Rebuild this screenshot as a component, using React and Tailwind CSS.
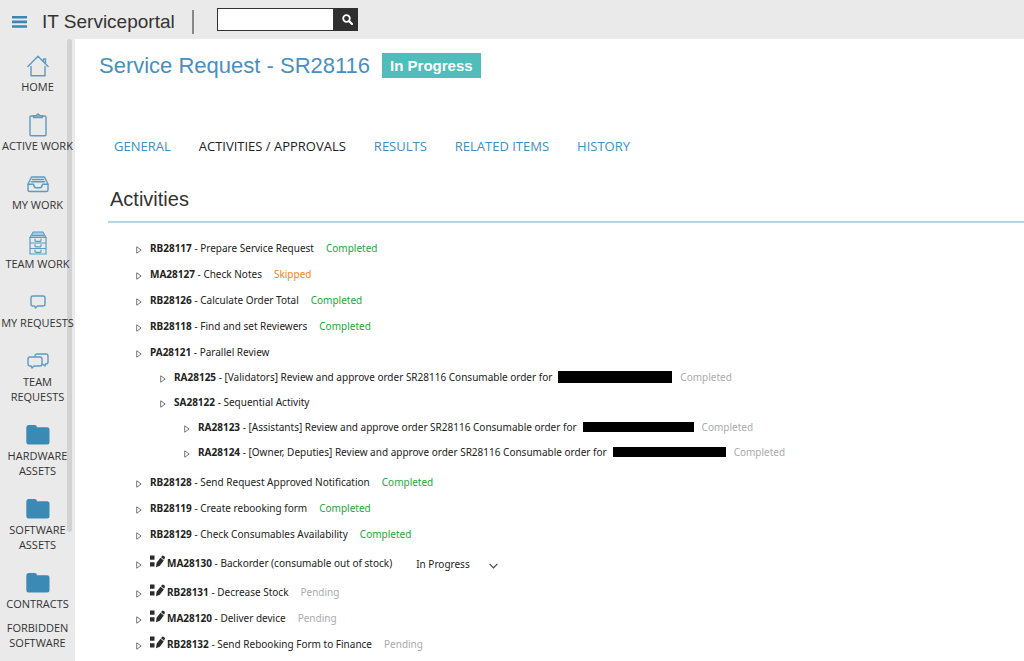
import { useState } from 'react';

const stroke = { fill: 'none', stroke: '#5b9cc4', strokeWidth: 1.4, strokeLinejoin: 'round', strokeLinecap: 'round' };

function HomeIcon() {
  return (
    <svg width="22" height="22" viewBox="0 0 22 22" {...stroke} aria-hidden="true">
      <path d="M.9 11.500 11 1.200 21.100 11.500M16.500 6.500V4H18.500V8.500M4 11.500V20.800H18V11.500" />
    </svg>
  );
}

function ClipboardIcon() {
  return (
    <svg width="18" height="24" viewBox="0 0 18 24" {...stroke} aria-hidden="true">
      <path d="M4.500 3H2.200Q1 3 1 4.200V21.500Q1 22.700 2.200 22.700H15.800Q17 22.700 17 21.500V4.200Q17 3 15.800 3H13.500" />
      <path d="M4.500 4.500V2.800L7.300 2.400 9 1l1.700 1.400 2.800.4v1.700Z" fill="#8dbad6" />
    </svg>
  );
}

function TrayIcon() {
  return (
    <svg width="22" height="18" viewBox="0 0 22 18" {...stroke} aria-hidden="true">
      <path d="M1 9.200 4.500 2H17.500L21 9.200V15Q21 16.500 19.500 16.500H2.500Q1 16.500 1 15Z" />
      <path d="M1 9.200H6.500Q7 12.800 9 12.800h4Q15 12.800 15.500 9.200H21M5.500 4.500h11M4.500 6.800h13" />
    </svg>
  );
}

function CabinetIcon() {
  return (
    <svg width="18" height="24" viewBox="0 0 18 24" {...stroke} strokeWidth="1.2" aria-hidden="true">
      <path d="M1 6.500 4.200 1h9.600L17 6.500Z" fill="#a9cbe0" />
      <path d="M1 6.500V23H17V6.500M1 12h16M1 17.500h16M3.500 4.500h11" />
      <path d="M6 8v1.500q0 .8.8.8h4.400q.8 0 .8-.8V8M6 13.500V15q0 .8.8.8h4.400q.8 0 .8-.8v-1.500M6 19v1.500q0 .8.8.8h4.400q.8 0 .8-.8V19" />
    </svg>
  );
}

function BubbleIcon() {
  return (
    <svg width="16" height="14" viewBox="0 0 16 14" {...stroke} aria-hidden="true">
      <path d="M3 1h10q2 0 2 2v6q0 2-2 2H7.500L5.500 13 4.500 11H3Q1 11 1 9V3Q1 1 3 1Z" />
    </svg>
  );
}

function BubblesIcon() {
  return (
    <svg width="22" height="16" viewBox="0 0 22 16" {...stroke} aria-hidden="true">
      <path d="M8 3.500V3Q8 1 10 1h9q2 0 2 2v6q0 2-2 2h-.5L18 13l-2.500-2" />
      <path d="M3 4h10q2 0 2 2v5q0 2-2 2H7L5 15 4.200 13H3q-2 0-2-2V6Q1 4 3 4Z" />
    </svg>
  );
}

function FolderIcon() {
  return (
    <svg width="24" height="20" viewBox="0 0 24 20" fill="#3a8ab5" aria-hidden="true">
      <path d="M2.500 0H8.500Q11 0 11 2.300H21Q23.500 2.300 23.500 4.800V17Q23.500 19.500 21 19.500H2.500Q.3 19.500 .3 17V2.500Q.3 0 2.500 0Z" />
    </svg>
  );
}

function TaskIcon() {
  return (
    <svg className="mb-1 mr-0.5 shrink-0" width="15" height="13" viewBox="0 0 15 13" fill="#2b2b2b" aria-hidden="true">
      <path d="M0 .5h4.500v4.300H0ZM0 7.200h4.500v4.300H0ZM6 12.300l.6-4.500L10.500 2.800 13.800 5.500 9.800 10.800ZM11 2.200 12 1Q12.800.2 13.800 1l.7.6q.8.7.1 1.600L14.200 4.800Z" />
    </svg>
  );
}

const nav = [
  { label: 'HOME', Icon: HomeIcon },
  { label: 'ACTIVE WORK', Icon: ClipboardIcon },
  { label: 'MY WORK', Icon: TrayIcon },
  { label: 'TEAM WORK', Icon: CabinetIcon },
  { label: 'MY REQUESTS', Icon: BubbleIcon },
  { label: 'TEAM REQUESTS', Icon: BubblesIcon },
  { label: 'HARDWARE ASSETS', Icon: FolderIcon },
  { label: 'SOFTWARE ASSETS', Icon: FolderIcon },
  { label: 'CONTRACTS', Icon: FolderIcon, tight: true },
  { label: 'FORBIDDEN SOFTWARE' },
];

const tabs = ['GENERAL', 'ACTIVITIES / APPROVALS', 'RESULTS', 'RELATED ITEMS', 'HISTORY'];

const activities = [
  { id: 'RB28117', title: 'Prepare Service Request', status: 'Completed', tone: 'text-[#22a83a]' },
  { id: 'MA28127', title: 'Check Notes', status: 'Skipped', tone: 'text-[#f5851a]' },
  { id: 'RB28126', title: 'Calculate Order Total', status: 'Completed', tone: 'text-[#22a83a]' },
  { id: 'RB28118', title: 'Find and set Reviewers', status: 'Completed', tone: 'text-[#22a83a]' },
  {
    id: 'PA28121',
    title: 'Parallel Review',
    children: [
      { id: 'RA28125', title: '[Validators] Review and approve order SR28116 Consumable order for', redacted: 'ml-1.5 h-3 w-[114px]', status: 'Completed', tone: 'text-[#a9abae]' },
      {
        id: 'SA28122',
        title: 'Sequential Activity',
        children: [
          { id: 'RA28123', title: '[Assistants] Review and approve order SR28116 Consumable order for', redacted: 'ml-1.5 h-2.5 w-[111px]', status: 'Completed', tone: 'text-[#a9abae]' },
          { id: 'RA28124', title: '[Owner, Deputies] Review and approve order SR28116 Consumable order for', redacted: 'ml-1.5 h-2.5 w-[113px]', status: 'Completed', tone: 'text-[#a9abae]' },
        ],
      },
    ],
  },
  { id: 'RB28128', title: 'Send Request Approved Notification', status: 'Completed', tone: 'text-[#22a83a]' },
  { id: 'RB28119', title: 'Create rebooking form', status: 'Completed', tone: 'text-[#22a83a]' },
  { id: 'RB28129', title: 'Check Consumables Availability', status: 'Completed', tone: 'text-[#22a83a]' },
  { id: 'MA28130', title: 'Backorder (consumable out of stock)', task: true, editable: true },
  { id: 'RB28131', title: 'Decrease Stock', task: true, status: 'Pending', tone: 'text-[#a9abae]' },
  { id: 'MA28120', title: 'Deliver device', task: true, status: 'Pending', tone: 'text-[#a9abae]' },
  { id: 'RB28132', title: 'Send Rebooking Form to Finance', task: true, status: 'Pending', tone: 'text-[#a9abae]' },
];

function Activity({ item, nested }) {
  const height = item.editable ? 'h-8' : nested ? 'h-[25px]' : 'h-[26px]';
  return (
    <li>
      <div className={`flex items-center whitespace-nowrap ${height}`}>
        <button type="button" aria-label={`Expand ${item.id}`} className="mr-2 mt-1 shrink-0">
          <svg width="6" height="8" viewBox="0 0 6 8" fill="#fff" stroke="#777" aria-hidden="true">
            <path d="M.7 .8 5.200 4 .7 7.200Z" />
          </svg>
        </button>
        {item.task && <TaskIcon />}
        <span>
          <b className="font-bold">{item.id}</b> - {item.title}
        </span>
        {item.redacted && <span className={`shrink-0 bg-black ${item.redacted}`} />}
        {item.status && <span className={`${item.redacted ? 'ml-2' : 'ml-3'} ${item.tone}`}>{item.status}</span>}
        {item.editable && (
          <div className="ml-6 mt-0.5 grid w-[82px] items-center">
            <select aria-label={`Status of ${item.id}`} className="col-start-1 row-start-1 w-full appearance-none bg-transparent">
              <option>In Progress</option>
              <option>Completed</option>
            </select>
            <svg className="pointer-events-none col-start-1 row-start-1 mt-1 justify-self-end" width="9" height="6" viewBox="0 0 9 6" fill="none" stroke="#444" strokeWidth="1.2" aria-hidden="true">
              <path d="M.6 .8 4.500 4.800 8.400 .8" />
            </svg>
          </div>
        )}
      </div>
      {item.children && (
        <ul className={`pl-6 ${nested ? '' : '-mt-px mb-[5px]'}`}>
          {item.children.map((child) => (
            <Activity key={child.id} item={child} nested />
          ))}
        </ul>
      )}
    </li>
  );
}

export default function App() {
  const [active, setActive] = useState(tabs[1]);
  return (
    <div className="flex min-h-screen flex-col bg-white font-['Open_Sans','Noto_Sans',sans-serif] text-[#333]">
      <header className="flex h-[39px] items-center bg-[#eaeaea] pl-3">
        <button type="button" aria-label="Menu" className="mt-1">
          <svg width="15" height="12" viewBox="0 0 15 12" fill="#3a87b4" aria-hidden="true">
            <path d="M0 0h15v2.600H0ZM0 4.600h15v2.600H0ZM0 9.200h15v2.600H0Z" />
          </svg>
        </button>
        <span className="ml-[15px] mt-1 font-['Liberation_Sans',sans-serif] text-[19px] leading-6">IT Serviceportal</span>
        <span className="ml-[17px] mt-1 h-6 w-0.5 bg-[#888]" />
        <form className="ml-[23px] flex h-[23px]" onSubmit={(e) => e.preventDefault()}>
          <input type="search" aria-label="Search" className="w-[117px] border border-[#333] bg-white px-1 text-xs outline-none" />
          <button type="submit" aria-label="Search" className="flex w-6 items-center justify-center bg-[#2f2f2f] pl-1">
            <svg width="11" height="11" viewBox="0 0 11 11" fill="none" stroke="#fff" aria-hidden="true">
              <circle cx="4.500" cy="4.500" r="3.300" strokeWidth="1.8" />
              <path d="m7 7 3 3" strokeWidth="2.200" strokeLinecap="round" />
            </svg>
          </button>
        </form>
      </header>
      <div className="flex grow">
        <nav className="relative w-[75px] shrink-0 bg-[#eaeaea] pt-[15px]">
          <ul>
            {nav.map(({ label, Icon, tight }) => (
              <li key={label} className={Icon ? (tight ? 'pb-[9px]' : 'pb-[19px]') : ''}>
                <a href="#" className="flex flex-col items-center text-center text-[11px] leading-[15px]">
                  {Icon && (
                    <span className="mb-px flex h-6 items-center">
                      <Icon />
                    </span>
                  )}
                  {label}
                </a>
              </li>
            ))}
          </ul>
          <span className="absolute right-[3px] top-0 h-[493px] w-[5px] rounded-full bg-black/10" />
        </nav>
        <main className="min-w-0 grow">
          <div className="flex items-center pl-6 pt-[14px] font-['Liberation_Sans',sans-serif]">
            <h1 className="text-[22px] leading-[25px] text-[#4a8fbd]">Service Request - SR28116</h1>
            <span className="ml-3 bg-[#4fbdb9] px-2 text-[15px] font-bold leading-[25px] text-white">In Progress</span>
          </div>
          <div role="tablist" className="mt-[58px] flex gap-7 pl-[39px] text-[13px] leading-5">
            {tabs.map((tab) => (
              <button
                key={tab}
                type="button"
                role="tab"
                aria-selected={tab === active}
                onClick={() => setActive(tab)}
                className={tab === active ? 'text-[#222]' : 'text-[#3e8fc1]'}
              >
                {tab}
              </button>
            ))}
          </div>
          <section className="ml-[33px] mt-[31px]">
            <h2 className="border-b-2 border-[#b4d5e3] pb-2.5 pl-0.5 font-['Liberation_Sans',sans-serif] text-[20px] leading-6">Activities</h2>
            <ul className="pl-7 pt-3 font-['Noto_Sans',sans-serif] text-[10px] leading-4 text-[#222]">
              {activities.map((item) => (
                <Activity key={item.id} item={item} />
              ))}
            </ul>
          </section>
        </main>
      </div>
    </div>
  );
}
